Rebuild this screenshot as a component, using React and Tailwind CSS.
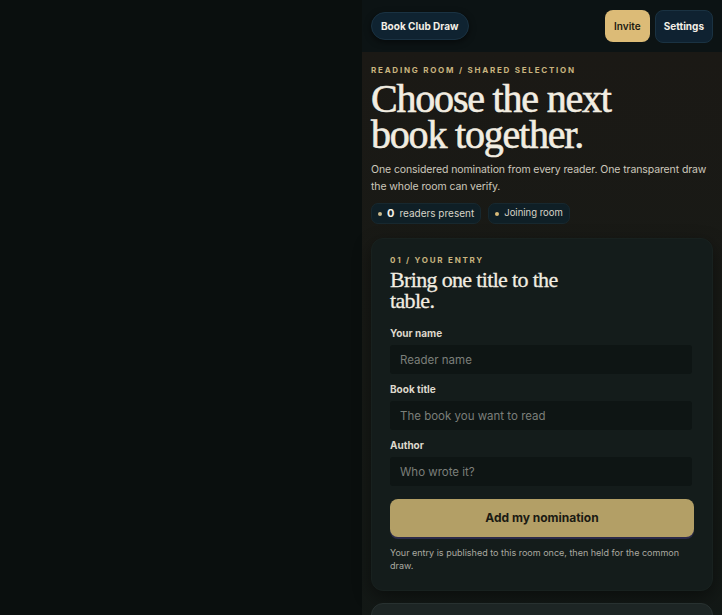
import { useState } from 'react'

const sans = { fontFamily: 'Inter, "Liberation Sans", sans-serif' }
const serif = { fontFamily: '"Liberation Serif", "DejaVu Serif", serif' }

function Field({ label, placeholder }) {
  const [value, setValue] = useState('')
  return (
    <label className="flex flex-col gap-[6px]">
      <span className="text-[10px] font-bold text-[#ddd8cc] leading-[12px]">{label}</span>
      <input
        value={value}
        onChange={(e) => setValue(e.target.value)}
        placeholder={placeholder}
        className="h-[29px] w-[302px] rounded-[3px] bg-[#0e1514] px-[10px] text-[11.5px] text-[#e6e1d6] placeholder:text-[#7b7f7a] outline-none"
        style={sans}
      />
    </label>
  )
}

export default function App() {
  return (
    <div className="min-h-screen bg-[#0a0f0e] flex justify-end" style={sans}>
      <div className="w-[360px] flex flex-col">
        {/* Top bar */}
        <header className="h-[52px] bg-[#0c1314] px-[9px] flex items-center justify-between">
          <button className="h-[28px] px-[9px] rounded-[14px] bg-[#0f2331] border border-[#1a3242] text-[10px] font-bold text-[#f3efe6] shadow-[0_2px_6px_rgba(0,0,0,0.5)]">
            Book Club Draw
          </button>
          <div className="flex items-center gap-[5px]">
            <button className="h-[32px] px-[9px] rounded-[8px] bg-[#dcbb77] text-[10px] font-semibold text-[#1d1a12]">
              Invite
            </button>
            <button className="h-[33px] px-[8px] rounded-[8px] bg-[#0f2231] border border-[#1a3242] text-[10px] font-bold text-[#f3efe6]">
              Settings
            </button>
          </div>
        </header>

        {/* Hero */}
        <main className="flex-1 bg-gradient-to-b from-[#1b1915] via-[#171a16] to-[#121816] px-[9px] pt-[13px]">
          <p className="text-[8px] font-bold tracking-[0.22em] text-[#c9b47f] leading-[10px]">
            READING ROOM / SHARED SELECTION
          </p>
          <h1
            className="mt-[6px] text-[40px] leading-[36px] tracking-[-0.03em] text-[#f2ede1] [-webkit-text-stroke:0.6px_#f2ede1]"
            style={serif}
          >
            Choose the next
            <br />
            book together.
          </h1>
          <p className="mt-[8px] text-[10.5px] leading-[17px] tracking-[-0.01em] text-[#cdc8bc]">
            One considered nomination from every reader. One transparent draw the whole room can verify.
          </p>

          <div className="mt-[8px] flex items-center gap-[7px]">
            <span className="h-[21px] px-[6px] rounded-[7px] bg-[#0f1f26] border border-[#17282f] flex items-center gap-[5px] text-[10px] text-[#d8d4c8]">
              <span className="w-[4px] h-[4px] rounded-full bg-[#cdbb8c]" />
              <b className="text-[#f5f1e8] text-[11px]">0</b>
              readers present
            </span>
            <span className="h-[21px] px-[6px] rounded-[7px] bg-[#0f1f26] border border-[#17282f] flex items-center gap-[5px] text-[9.5px] text-[#d8d4c8]">
              <span className="w-[4px] h-[4px] rounded-full bg-[#d9bb79]" />
              Joining room
            </span>
          </div>

          {/* Entry card */}
          <section className="mt-[14px] rounded-[12px] bg-[#141c1b] border border-[#18211f] px-[18px] pt-[16px] pb-[18px] shadow-[0_6px_18px_rgba(0,0,0,0.45)]">
            <p className="text-[8px] font-bold tracking-[0.22em] text-[#c9b47f] leading-[10px]">
              01 / YOUR ENTRY
            </p>
            <h2
              className="mt-[4px] max-w-[190px] text-[22px] leading-[21px] tracking-[-0.03em] text-[#f2ede1] [-webkit-text-stroke:0.3px_#f2ede1]"
              style={serif}
            >
              Bring one title to the table.
            </h2>

            <div className="mt-[16px] flex flex-col gap-[9px]">
              <Field label="Your name" placeholder="Reader name" />
              <Field label="Book title" placeholder="The book you want to read" />
              <Field label="Author" placeholder="Who wrote it?" />
            </div>

            <button className="mt-[13px] w-[304px] h-[38px] rounded-[8px] bg-[#b39f66] text-[12px] font-bold text-[#1b1a13] shadow-[0_2px_0_#2c2a4a]">
              Add my nomination
            </button>
            <p className="mt-[9px] text-[9px] leading-[13px] text-[#aaa9a0]">
              Your entry is published to this room once, then held for the common draw.
            </p>
          </section>

          {/* Next card (peeking) */}
          <section className="mt-[12px] h-[80px] rounded-t-[12px] bg-[#1d2524] border border-[#283130]" />
        </main>
      </div>
    </div>
  )
}
